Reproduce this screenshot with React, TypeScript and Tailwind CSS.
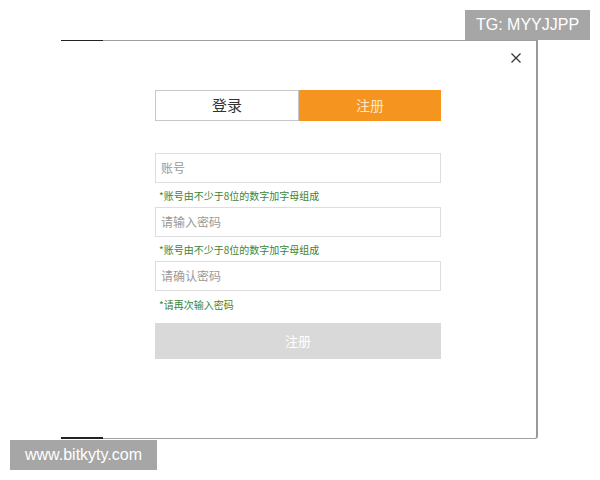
export default function App() {
  const cjk = { fontFamily: '"Noto Sans CJK SC", "Noto Sans", sans-serif' };
  return (
    <div className="relative w-[600px] h-[480px] bg-white overflow-hidden" style={cjk}>
      <div className="pt-[40px] pl-[61px]">
        <div className="relative w-[477px] h-[399px] border-t border-b border-r-2 border-[#a0a0a0] border-r-[#999] rounded-br-[3px] bg-white">
          <div className="absolute -top-px left-0 w-[42px] h-px bg-[#222]" />
          <div className="absolute -bottom-px left-0 w-[42px] h-[2px] bg-[#222]" />
          <div className="flex justify-end pr-[14px] pt-[10px] h-[49px]">
            <svg width="12" height="12" viewBox="0 0 12 12" className="mt-[1px]">
              <path d="M1.5 1.5 L10.5 10.5 M10.5 1.5 L1.5 10.5" stroke="#333" strokeWidth="1.2" />
            </svg>
          </div>
          <div className="w-[286px] ml-[94px] flex flex-col">
            <div className="flex h-[31px]">
              <div className="w-[144px] h-full border border-[#c8c8c8] flex items-center justify-center text-[15px] text-[#333]">
                登录
              </div>
              <div className="flex-1 h-full bg-[#f5951f] flex items-center justify-center text-[14px] text-[#fde9c8]">
                注册
              </div>
            </div>
            <div className="h-[32px]" />
            <div className="h-[30px] border border-[#dedede] flex items-center pl-[5px] text-[12px] text-[#999]">
              账号
            </div>
            <div className="h-[24px] flex items-center pl-[4px] text-[10px] text-[#3c8436]">
              *账号由不少于8位的数字加字母组成
            </div>
            <div className="h-[30px] border border-[#dedede] flex items-center pl-[5px] text-[12px] text-[#999]">
              请输入密码
            </div>
            <div className="h-[24px] flex items-center pl-[4px] text-[10px] text-[#3c8436]">
              *账号由不少于8位的数字加字母组成
            </div>
            <div className="h-[30px] border border-[#dedede] flex items-center pl-[5px] text-[12px] text-[#999]">
              请确认密码
            </div>
            <div className="h-[26px] flex items-center pl-[4px] text-[10px] text-[#3c8436]">
              *请再次输入密码
            </div>
            <div className="h-[6px]" />
            <div className="h-[36px] bg-[#d9d9d9] flex items-center justify-center text-[13px] text-white">
              注册
            </div>
          </div>
        </div>
      </div>
      <div
        className="absolute top-[10px] left-[465px] w-[125px] h-[30px] bg-[#a6a6a6] flex items-center justify-center text-white text-[16px]"
        style={{ fontFamily: '"Liberation Sans", Arial, sans-serif' }}
      >
        TG: MYYJJPP
      </div>
      <div
        className="absolute top-[440px] left-[10px] w-[147px] h-[30px] bg-[#a6a6a6] flex items-center justify-center text-white text-[16px]"
        style={{ fontFamily: '"Liberation Sans", Arial, sans-serif' }}
      >
        www.bitkyty.com
      </div>
    </div>
  );
}
